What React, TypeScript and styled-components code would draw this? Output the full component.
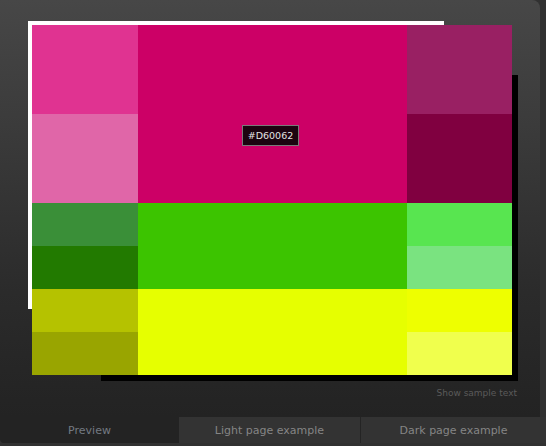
import React from "react";
import styled, { createGlobalStyle } from "styled-components";

const Global = createGlobalStyle`
  html, body { margin: 0; padding: 0; background: #313131; }
  body { font-family: "DejaVu Sans", Verdana, sans-serif; }
`;

const Page = styled.div`
  width: 546px;
  height: 446px;
  display: flex;
  flex-direction: column;
  background: #313131;
  overflow: hidden;
`;

const Panel = styled.div`
  width: 540px;
  height: 417px;
  box-sizing: border-box;
  padding: 25px 0 0 32px;
  background: linear-gradient(#474747 0%, #2b2b2b 70%, #232323 100%);
  border-top-right-radius: 8px;
  display: flex;
  flex-direction: column;
`;

const Stage = styled.div`
  position: relative;
  width: 480px;
  height: 350px;
`;

const WhiteFrame = styled.div`
  position: absolute;
  left: -4px;
  top: -4px;
  width: 416px;
  height: 288px;
  background: #ffffff;
`;

const Shadow = styled.div`
  position: absolute;
  left: 69px;
  top: 50px;
  width: 417px;
  height: 306px;
  background: #000000;
`;

const Grid = styled.div`
  position: relative;
  display: grid;
  grid-template-columns: 106px 269px 105px;
  grid-template-rows: 89px 89px 43px 43px 43px 43px;
  width: 480px;
  height: 350px;
`;

const Cell = styled.div<{ $c: string; $span?: number }>`
  background: ${(p) => p.$c};
  grid-row: span ${(p) => p.$span ?? 1};
`;

const Tip = styled.div`
  position: absolute;
  left: 210px;
  top: 100px;
  width: 57px;
  height: 21px;
  box-sizing: border-box;
  border: 1px solid #7a7a7a;
  background: #1c0410;
  color: #e2e2e2;
  font-size: 9.5px;
  display: flex;
  align-items: center;
  justify-content: center;
`;

const SampleRow = styled.div`
  margin-top: 12px;
  padding-right: 23px;
  text-align: right;
  font-size: 9px;
  line-height: 12px;
  color: #5a5a5a;
`;

const TabBar = styled.div`
  display: flex;
  height: 26px;
  background: #333333;
`;

const Tab = styled.div<{ $active?: boolean; $w?: number }>`
  ${(p) => (p.$w ? `width: ${p.$w}px;` : "flex: 1;")}
  display: flex;
  align-items: center;
  justify-content: center;
  font-size: 11px;
  color: ${(p) => (p.$active ? "#737a82" : "#858585")};
  background: ${(p) => (p.$active ? "#232323" : "#333333")};
  border-bottom-left-radius: ${(p) => (p.$active ? "4px" : "0")};
`;

const Divider = styled.div`
  width: 1px;
  background: #242424;
`;

const cells: { c: string; span?: number }[] = [
  { c: "#E03391" },
  { c: "#CC0066", span: 2 },
  { c: "#992063" },
  { c: "#E066A8" },
  { c: "#800040" },
  { c: "#3A8F38" },
  { c: "#3CC400", span: 2 },
  { c: "#58E550" },
  { c: "#227A00" },
  { c: "#7AE380" },
  { c: "#B5C200" },
  { c: "#E6FF00", span: 2 },
  { c: "#EEFF00" },
  { c: "#99A500" },
  { c: "#F0FF4D" },
];

export default function App() {
  return (
    <>
      <Global />
      <Page>
        <Panel>
          <Stage>
            <WhiteFrame />
            <Shadow />
            <Grid>
              {cells.map((x, i) => (
                <Cell key={i} $c={x.c} $span={x.span} />
              ))}
            </Grid>
            <Tip>#D60062</Tip>
          </Stage>
          <SampleRow>Show sample text</SampleRow>
        </Panel>
        <TabBar>
          <Tab $active $w={179}>Preview</Tab>
          <Tab $w={181}>Light page example</Tab>
          <Divider />
          <Tab>Dark page example</Tab>
        </TabBar>
      </Page>
    </>
  );
}
